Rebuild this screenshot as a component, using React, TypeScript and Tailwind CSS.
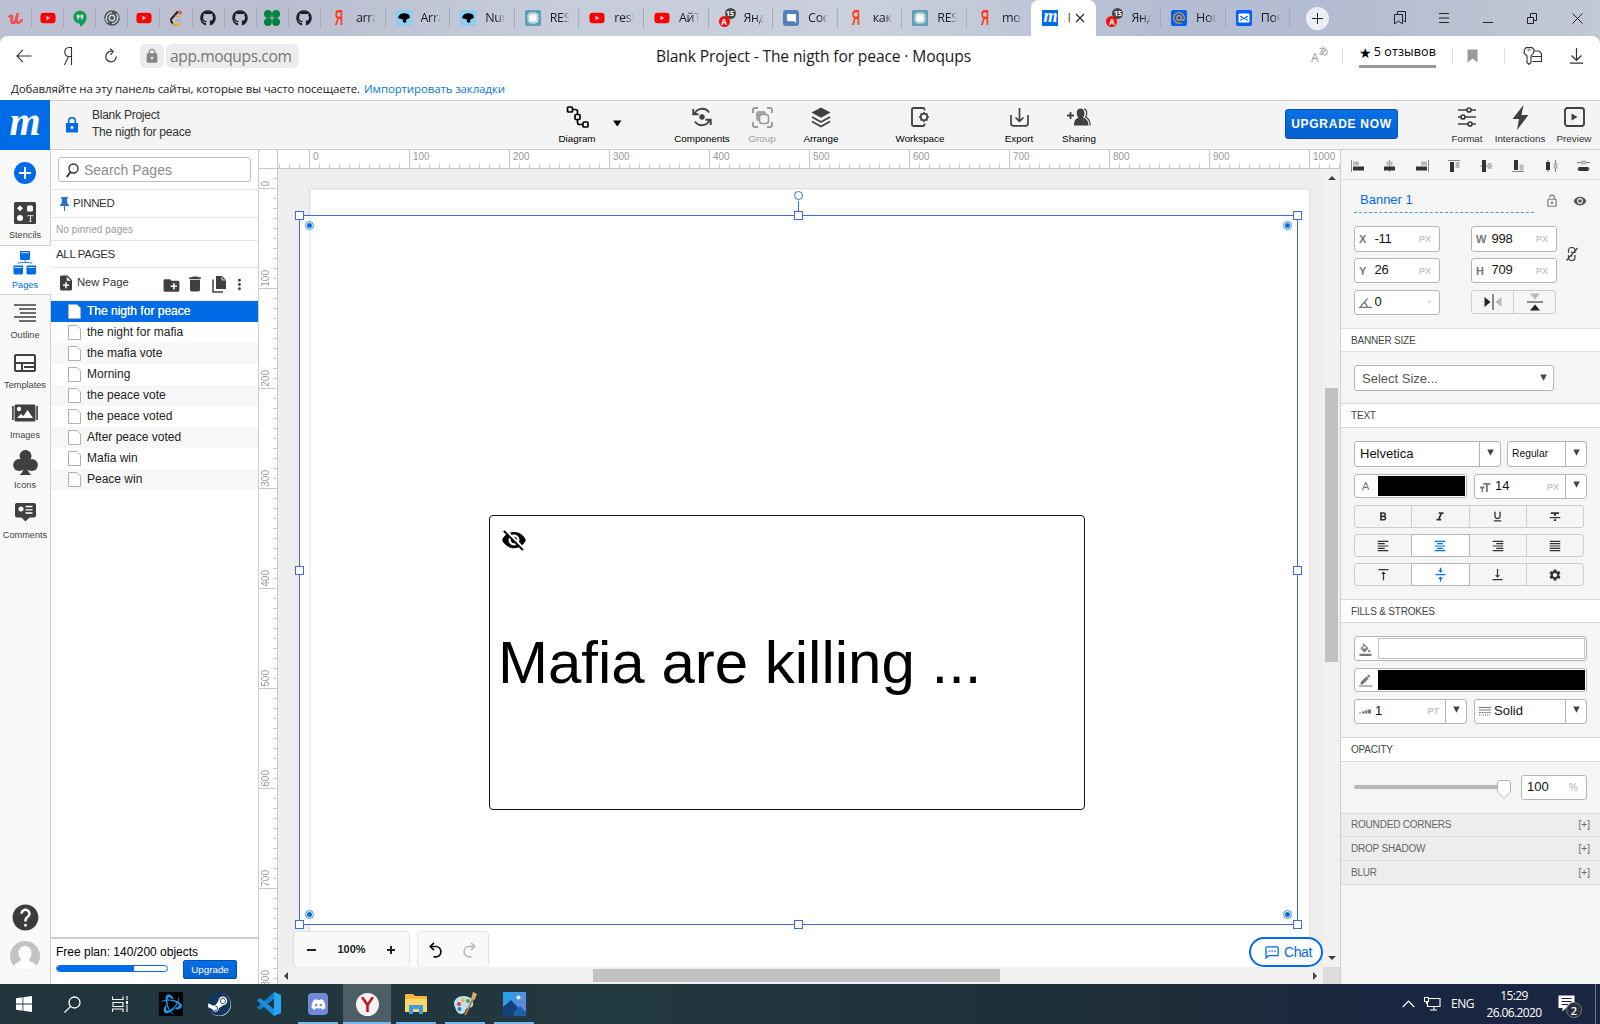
import React from "react";
import { FaGithub, FaYoutube, FaSteam, FaDiscord } from "react-icons/fa";
import { SiBattledotnet } from "react-icons/si";
import {
  MdCreateNewFolder, MdDelete, MdEdit, MdFormatAlignCenter, MdFormatAlignJustify, MdFormatAlignLeft,
  MdFormatAlignRight, MdFormatBold, MdFormatColorFill, MdFormatItalic, MdFormatStrikethrough,
  MdFormatUnderlined, MdHelp, MdLock, MdLockOpen, MdMoreVert, MdNoteAdd,
  MdSettings, MdVerticalAlignBottom, MdVerticalAlignCenter, MdVerticalAlignTop, MdVisibility,
  MdVisibilityOff, MdAlternateEmail, MdModeComment,
} from "react-icons/md";

type Kids = { children?: React.ReactNode };

/* ---------- browser chrome ---------- */

const Ya = () => (
  <span className="inline-block scale-x-[0.52] font-['Liberation_Sans'] text-[22px] font-bold leading-none text-[#fc3f1d]">Я</span>
);
const Tube = () => <FaYoutube size={16} color="#ff0000" />;
const Duck = () => (
  <svg width="16" height="16" viewBox="0 0 16 16">
    <rect width="16" height="16" fill="#8fcdf0" />
    <path d="M2 7.5C3 4 7 2.5 10 3.5C13 4 14.5 6 13.5 8C12.5 9 11 8.5 10.5 9.5L9.5 13L7 12L6.5 9C4 9 3 8.5 2 7.5Z" fill="#000" />
  </svg>
);
const Rest = () => (
  <svg width="16" height="16" viewBox="0 0 16 16">
    <rect width="16" height="16" rx="1.5" fill="#5f9dbb" />
    <circle cx="8" cy="8" r="3.600" fill="#fff" />
    <path d="M8 2V14M2 8H14M3.500 3.500L12.500 12.500M12.500 3.500L3.500 12.500M5.500 2.500L10.500 13.500M10.500 2.500L5.500 13.500M2.500 5.500L13.500 10.500M2.500 10.500L13.500 5.500" stroke="#fff" strokeWidth="1.100" />
  </svg>
);
const Anti = () => (
  <span className="relative block h-4 w-4">
    <span className="absolute -top-0.5 left-[6px] h-[11px] w-[11px] rounded-full bg-[#484848] text-center text-[7px] font-bold leading-[11px] text-white">15</span>
    <span className="absolute left-0 top-[6px] h-[11px] w-[11px] rounded-full bg-[#f50d0d] text-center text-[8px] font-bold leading-[11px] text-white">A</span>
  </span>
);
const Chatty = () => (
  <span className="flex h-4 w-4 items-center justify-center rounded-[3px] bg-[#5181b8] text-white"><MdModeComment size={11} /></span>
);
const Moq = () => (
  <span className="flex h-4 w-4 items-center justify-center bg-[#006be6] font-['Liberation_Serif'] text-[18px] font-bold italic leading-none text-white"><span className="-mt-[5px]">m</span></span>
);

const pinned: React.ReactNode[] = [
  <svg width="15" height="13" viewBox="0 0 15 13"><path d="M1.5 4.5C3 3.500 4.500 3 4 5.500C3.300 8.500 3 11 5 11C7 11 8 8 8.500 5M9.500 2C8.500 6 8 10.500 10 10.800C12 11 13 9.500 14 8" fill="none" stroke="#ec5252" strokeWidth="2.600" strokeLinecap="round" /></svg>,
  <Tube />,
  <svg width="14" height="17" viewBox="0 0 14 17"><path d="M7 0.500A6.500 6.500 0 0 0 7 13.800V16.500C10.500 15 13.600 11.500 13.600 7.200A6.600 6.600 0 0 0 7 0.500Z" fill="#0f9d58" /><path d="M3.800 4.800H6.400V7.600L5.300 9.400H4.300L5 7.600H3.800ZM7.600 4.800H10.200V7.600L9.100 9.400H8.100L8.800 7.600H7.600Z" fill="#fff" /></svg>,
  <svg width="16" height="16" viewBox="0 0 16 16"><circle cx="8" cy="8" r="7.800" fill="#4a565b" /><path d="M8 2.300A5.700 5.700 0 0 0 2.500 9M13.500 7A5.700 5.700 0 0 1 8 13.700M12 3.500Q14 5 14.200 8M4 12.500Q2 11 1.800 8" fill="none" stroke="#cfd5d8" strokeWidth="1.300" /><circle cx="8" cy="8" r="3.400" fill="#cfd5d8" /><circle cx="8" cy="8" r="1.900" fill="#4a565b" /></svg>,
  <Tube />,
  <svg width="14" height="17" viewBox="0 0 14 17"><path d="M8.500 2L2.500 8.500Q1.200 10.300 2.500 12L4 13.600" fill="none" stroke="#1a1a1a" strokeWidth="1.900" strokeLinecap="round" /><path d="M4.500 13.800Q7.500 17 10.500 13.700" fill="none" stroke="#f89f1b" strokeWidth="2" strokeLinecap="round" /><path d="M6 10.500H12" stroke="#b3b3b3" strokeWidth="1.500" /><path d="M6 6.500Q8.500 5 10.500 7.500" fill="none" stroke="#f89f1b" strokeWidth="1.500" /><circle cx="11" cy="2.500" r="2" fill="#e0524b" /></svg>,
  <FaGithub size={16} color="#1d2027" />,
  <FaGithub size={16} color="#1d2027" />,
  <svg width="16" height="16" viewBox="0 0 16 16" fill="#00843d"><circle cx="3.900" cy="3.900" r="3.900" /><circle cx="12.100" cy="3.900" r="3.900" /><circle cx="3.900" cy="12.100" r="3.900" /><circle cx="12.100" cy="12.100" r="3.900" /><path d="M3 3H7.500V7.500H3ZM8.500 3H13V7.500H8.500ZM3 8.500H7.500V13H3ZM8.500 8.500H13V13H8.500Z" /></svg>,
  <FaGithub size={16} color="#1d2027" />,
];

const tabs: [React.ReactNode, string][] = [
  [<Ya />, "arra"], [<Duck />, "Arra"], [<Duck />, "Nun"], [<Rest />, "RES"], [<Tube />, "rest"], [<Tube />, "АйТ"],
  [<Anti />, "Янд"], [<Chatty />, "Соо"], [<Ya />, "как"], [<Rest />, "RES"], [<Ya />, "mo"],
];
const tabsAfter: [React.ReactNode, string][] = [
  [<Anti />, "Янд"],
  [<span className="flex h-4 w-4 items-center justify-center rounded-[2px] bg-[#005ff9] text-[#ff9e00]"><MdAlternateEmail size={14} /></span>, "Нов"],
  [<svg width="16" height="16" viewBox="0 0 16 16"><rect width="16" height="16" rx="2" fill="#005ff9" /><rect x="2.500" y="3.500" width="11" height="9" rx="1" fill="#fff" /><path d="M4.500 6L8 9L11.500 6M4.500 10.500L6 9M11.500 10.500L10 9" fill="none" stroke="#005ff9" strokeWidth="1.300" /></svg>, "Поч"],
];

const Tab = ({ icon, text, last }: { icon: React.ReactNode; text: string; last?: boolean }) => (
  <div className={`flex h-5 w-[64.6px] shrink-0 items-center pl-[9px] ${last ? "" : "border-r border-[#a3aabb]"}`}>
    <span className="flex w-[18px] shrink-0 justify-center">{icon}</span>
    <span className="ml-[8px] w-[30px] shrink-0 whitespace-nowrap text-[12.5px] tracking-tight text-[#1d1f26] [mask-image:linear-gradient(90deg,#000_12px,transparent_20px)]">{text}</span>
  </div>
);

const TabBar = () => (
  <div className="flex h-9 items-center bg-[linear-gradient(90deg,#bcc0d2_0%,#b9bfd1_18%,#c6ccd9_34%,#c9cfdb_55%,#bdc4d6_66%,#b4bdd2_72%,#b3bcd0_84%,#c2c8d4_100%)] font-['Open_Sans']">
    {pinned.map((p, i) => (
      <div key={i} className="flex h-5 w-[32.1px] shrink-0 items-center justify-center border-r border-[#a3aabb]">{p}</div>
    ))}
    {tabs.map(([ic, t], i) => <Tab key={i} icon={ic} text={t} last={i === 10} />)}
    <div className="flex h-9 w-[65px] shrink-0 items-center rounded-t-[8px] bg-white pl-[11px]">
      <Moq />
      <span className="ml-[9px] w-[10px] text-[12.5px] text-[#555] [mask-image:linear-gradient(90deg,#000_2.5px,transparent_3px)]">B</span>
      <svg className="-ml-[2px]" width="10" height="10" viewBox="0 0 10 10"><path d="M1 1L9 9M9 1L1 9" stroke="#222" strokeWidth="1.100" /></svg>
    </div>
    {tabsAfter.map(([ic, t], i) => <Tab key={i} icon={ic} text={t} />)}
    <span className="ml-[16px] flex h-[23px] w-[23px] shrink-0 items-center justify-center rounded-full bg-[#edeff4]">
      <svg width="11" height="11" viewBox="0 0 11 11"><path d="M5.500 0V11M0 5.500H11" stroke="#222" /></svg>
    </span>
    <div className="ml-[64px] flex shrink-0 items-center">
      <svg width="14" height="16" viewBox="0 0 14 16" fill="none" stroke="#222"><path d="M4.500 4.500V1.500H12.500V12L10.500 10.500" /><path d="M1.500 4.500H9.500V14L5.500 11L1.500 14Z" /></svg>
      <svg className="ml-[31px]" width="12" height="10" viewBox="0 0 12 10"><path d="M1 .5H11M1 5H11M1 9.500H11" stroke="#222" /></svg>
      <svg className="ml-[32px] mt-[8px]" width="12" height="10" viewBox="0 0 12 10"><path d="M1 5.500H11" stroke="#222" /></svg>
      <svg className="ml-[32px]" width="12" height="11" viewBox="0 0 12 11" fill="none" stroke="#222"><path d="M1.500 4.500H7.500V10.500H1.500ZM4.500 4.500V.5H10.500V7.500H7.500" /></svg>
      <svg className="ml-[34px]" width="11" height="11" viewBox="0 0 11 11"><path d="M.5 .5L10.500 10.500M10.500 .5L.5 10.500" stroke="#222" /></svg>
    </div>
  </div>
);

const Sep = ({ className = "" }) => <span className={`h-4 w-px bg-[#dedede] ${className}`} />;

const AddressBar = () => (
  <div className="bg-[#bcc2d2] font-['Open_Sans']">
    <div className="flex h-10 items-center rounded-t-[8px] bg-white">
      <svg className="ml-[16px]" width="16" height="14" viewBox="0 0 16 14" fill="none" stroke="#333" strokeWidth="1.100"><path d="M15.500 7H1M7 .8L.9 7L7 13.200" /></svg>
      <svg className="ml-[31px]" width="10" height="20" viewBox="0 0 10 20" fill="none" stroke="#333" strokeWidth="1.100"><path d="M8.500 19V1.500H6C3 1.500 1.800 3.500 1.800 6C1.800 8.500 3 10.500 6 10.500H8.500M5.500 10.500L1.500 19" /></svg>
      <svg className="ml-[31px]" width="14" height="16" viewBox="0 0 14 16" fill="none" stroke="#333" strokeWidth="1.200"><path d="M7.500 3.500A5.200 5.200 0 1 0 12.200 8.500M6 .8L9.200 3.600L6.500 6.800" /></svg>
      <span className="ml-[22px] flex h-6 w-[24px] items-center justify-center rounded-[6px] bg-[#ececec] text-[#858585]"><MdLock size={16} /></span>
      <span className="ml-[2px] flex h-6 w-[133px] items-center rounded-[6px] bg-[#ececec] pl-[4px] pt-[2px] text-[15.600px] tracking-[-0.026em] text-[#777]">app.moqups.com</span>
      <div className="flex w-[1015px] items-center">
        <span className="ml-[357px] mt-[2px] whitespace-nowrap text-[15.600px] tracking-[-0.008em] text-[#1a1a1a]">Blank Project - The nigth for peace · Moqups</span>
      </div>
      <div className="-ml-[3px] flex shrink-0 items-center">
        <span className="flex w-[17px] items-start text-[#9a9a9a]"><span className="mt-1 text-[12px] leading-none">A</span><span className="-mt-0.5 font-['Noto_Sans_CJK_JP'] text-[10px] leading-none">あ</span></span>
        <Sep className="ml-[14px]" />
        <span className="ml-[16px] mt-[1px] box-content flex h-[14px] w-[77px] items-center justify-center whitespace-nowrap border-b-[3px] border-[#999] pb-[5px] text-[12.500px] leading-none tracking-[0.01em] text-black"><span className="mr-[2px] font-['DejaVu_Sans'] text-[14px]">★</span>5 отзывов</span>
        <Sep className="ml-[16px]" />
        <svg className="ml-[14px]" width="11" height="14" viewBox="0 0 11 14"><path d="M.5 .5H10.500V13.500L5.500 9.500L.5 13.500Z" fill="#999" /></svg>
        <Sep className="ml-[26px]" />
        <svg className="ml-[18px]" width="20" height="18" viewBox="0 0 20 18" fill="none" stroke="#333" strokeWidth="1.100"><path d="M3 .6H9L11 2.500L10.600 6L8 9V15.500L6 17.400L4 15.500V9L1 6L1.500 2.500ZM4.500 3H7.500M11 4H16L18.400 6.500V14.500H9.500M9 9.500H18" /></svg>
        <svg className="ml-[27px]" width="13" height="16" viewBox="0 0 13 16" fill="none" stroke="#333" strokeWidth="1.200"><path d="M6.500 0V12M1.500 7.500L6.500 12.300L11.500 7.500M0 15.200H13" /></svg>
      </div>
    </div>
    <div className="flex h-6 items-center bg-white pl-[11px] pt-[2px] text-[11.500px] text-[#222]">
      <span className="w-[353px] whitespace-nowrap tracking-[-0.011em]">Добавляйте на эту панель сайты, которые вы часто посещаете.</span>
      <span className="whitespace-nowrap tracking-[-0.012em] text-[#0a7ad6]">Импортировать закладки</span>
    </div>
  </div>
);

/* ---------- application header ---------- */

const Tool = ({ icon, label, className = "", tone = "text-black" }: { icon: React.ReactNode; label: string; className?: string; tone?: string }) => (
  <div className={`flex h-12 w-[60px] shrink-0 flex-col items-center ${className}`}>
    <span className="mt-[2px] flex h-[28px] items-center text-[#404040]">{icon}</span>
    <span className={`mt-[2px] text-[9.800px] leading-[12px] ${tone}`}>{label}</span>
  </div>
);

const Header = () => (
  <header className="flex h-[50px] shrink-0 border-b border-t border-[#d0d0d0] bg-[#f4f4f4]">
    <div className="-mt-px flex h-[50px] w-[50px] shrink-0 items-center justify-center bg-[#006be6]">
      <span className="-mt-[7px] font-['Liberation_Serif'] text-[40px] font-bold italic leading-none text-white">m</span>
    </div>
    <div className="flex w-[497px] shrink-0 items-center">
      <svg className="ml-[16px]" width="12" height="16" viewBox="0 0 12 16"><path d="M0 6H12V14.500Q12 15.500 11 15.500H1Q0 15.500 0 14.500Z" fill="#006be6" /><path d="M2.700 6V4A3.300 3.300 0 0 1 9.300 4V6" fill="none" stroke="#006be6" strokeWidth="1.600" /><circle cx="6" cy="10.500" r="1.500" fill="#fff" /></svg>
      <div className="ml-[14px] mt-[-2px] text-[12px] leading-[17px] tracking-[-0.02em] text-[#333]"><div>Blank Project</div><div>The nigth for peace</div></div>
    </div>
    <Tool label="Diagram" icon={<svg width="23" height="22" viewBox="0 0 23 22" fill="none" stroke="#000" strokeWidth="1.700"><rect x="1.500" y="1" width="5" height="5" rx="1" /><rect x="9" y="8.500" width="5" height="5" rx="1" /><rect x="17" y="16" width="5" height="5" rx="1" /><path d="M6.500 3.500H9.500Q11.500 3.500 11.500 5.500V8.500M11.500 13.500V16.500Q11.500 18.500 13.500 18.500H17" /></svg>} />
    <svg className="mr-[45px] mt-[19px] shrink-0" width="20" height="7" viewBox="0 0 20 7"><path d="M6 .5H14.500L10.300 6.500Z" fill="#000" /></svg>
    <Tool label="Components" icon={<svg width="20" height="20" viewBox="0 0 20 20" fill="none" stroke="#404040" strokeWidth="1.900"><path d="M2.500 7A8.200 8.200 0 0 1 17 5.500M17.500 13A8.200 8.200 0 0 1 3 14.500M1.300 2V7.300H6.500M18.700 18V12.700H13.500" /><circle cx="10" cy="10" r="2.700" fill="#404040" stroke="none" /></svg>} />
    <Tool label="Group" tone="text-[#a0a0a0]" className="-mr-px" icon={<svg width="21" height="21" viewBox="0 0 21 21"><path d="M1 6V3Q1 1 3 1H6M15 1H18Q20 1 20 3V6M20 15V18Q20 20 18 20H15M6 20H3Q1 20 1 18V15" fill="none" stroke="#9b9b9b" strokeWidth="1.900" /><rect x="4" y="4" width="10" height="10" rx="2.500" fill="#a5a5a5" /><rect x="7.500" y="7.500" width="9" height="9" rx="2.500" fill="#f4f4f4" stroke="#9b9b9b" strokeWidth="1.600" /></svg>} />
    <Tool label="Arrange" icon={<svg width="20" height="21" viewBox="0 0 20 21"><path d="M10 .5L19.500 5.500L10 10.700L.5 5.500Z" fill="#404040" /><path d="M1 10L10 15L19 10M1 14.500L10 19.500L19 14.500" fill="none" stroke="#404040" strokeWidth="1.800" /></svg>} />
    <Tool label="Workspace" className="ml-[39px]" icon={<svg width="20" height="20" viewBox="0 0 20 20" fill="none" stroke="#404040" strokeWidth="1.800"><path d="M14.500 3.500V2.500Q14.500 1 13 1H3.500Q2 1 2 2.500V17.500Q2 19 3.500 19H13Q14.500 19 14.500 17.500V16.500" /><circle cx="14" cy="10" r="3.300" /><path d="M14 5V6.500M14 13.500V15M9 10H10.500M17.500 10H19M10.500 6.500L11.700 7.700M16.300 12.300L17.500 13.500M17.500 6.500L16.300 7.700M11.700 12.300L10.500 13.500" strokeWidth="1.500" /></svg>} />
    <Tool label="Export" className="ml-[39px]" icon={<svg width="19" height="20" viewBox="0 0 19 20" fill="none" stroke="#404040" strokeWidth="1.700"><path d="M9.500 1V14M5.500 10.500L9.500 14.300L13.500 10.500M1 8V16.500Q1 18.800 3.500 18.800H15.500Q18 18.800 18 16.500V8" /></svg>} />
    <Tool label="Sharing" icon={<svg width="24" height="18" viewBox="0 0 24 18"><path d="M0 7.500H7M3.500 4V11" stroke="#404040" strokeWidth="1.800" /><path d="M13.500 .5C16 .5 17.500 2.300 17.500 5C17.500 7 16.700 8.500 16 9.500C19 11 21.500 12 21.500 17.500H7C7 12 9 11 11.500 9.500C10.500 8.500 9.700 7 9.700 5C9.700 2.300 11 .5 13.500 .5Z" fill="#404040" /><path d="M17 .8Q20 1.500 19.700 5.500Q19.500 7.500 18.500 9Q23 11 23.200 17.500" fill="none" stroke="#404040" strokeWidth="1.200" /></svg>} />
    <button className="ml-[176px] mt-[8px] h-[30px] w-[113px] shrink-0 whitespace-nowrap rounded-[3px] border border-[#0353b4] bg-gradient-to-b from-[#0a70e6] to-[#0560cf] text-[12px] font-bold tracking-[0.06em] text-white">UPGRADE NOW</button>
    <Tool label="Format" tone="text-[#333]" className="ml-[39px]" icon={<svg width="20" height="20" viewBox="0 0 20 20" fill="#f4f4f4" stroke="#404040" strokeWidth="1.700"><path d="M1 3H19M1 10H19M1 17H19" /><circle cx="12" cy="3" r="2" /><circle cx="6" cy="10" r="2" /><circle cx="13" cy="17" r="2" /></svg>} />
    <Tool label="Interactions" tone="text-[#333]" className="-ml-[7px]" icon={<svg width="17" height="25" viewBox="0 0 17 25"><path d="M11.500 0L.5 14H7L5 25L16.500 10H9.500Z" fill="#404040" /></svg>} />
    <Tool label="Preview" tone="text-[#333]" className="-ml-[6px]" icon={<svg width="21" height="20" viewBox="0 0 21 20"><rect x="1" y="1" width="19" height="18" rx="2.500" fill="none" stroke="#404040" strokeWidth="1.900" /><path d="M7.500 6.500V13.500L13.500 10Z" fill="#404040" /></svg>} />
  </header>
);

/* ---------- left side ---------- */

const RailItem = ({ icon, label, active }: { icon: React.ReactNode; label: string; active?: boolean }) => (
  <div className={`flex shrink-0 flex-col items-center ${active ? "h-[50px] w-[51px] border-y border-[#cfcfcf] bg-white pr-px" : "h-[50px] w-[50px]"}`}>
    <span className={`flex h-[29px] items-center justify-center ${active ? "mt-[2px]" : "mt-[3px]"}`}>{icon}</span>
    <span className={`mt-[2px] text-[9.200px] leading-[12px] ${active ? "text-[#006be6]" : "text-[#444]"}`}>{label}</span>
  </div>
);

const Rail = () => (
  <nav className="flex w-[51px] shrink-0 flex-col border-r border-[#cfcfcf] bg-[#f9f9f9]">
    <span className="mb-[11px] ml-[14px] mt-[12px] flex h-[22px] w-[22px] shrink-0 items-center justify-center rounded-full bg-[#006be6]">
      <svg width="12" height="12" viewBox="0 0 12 12"><path d="M6 0V12M0 6H12" stroke="#fff" strokeWidth="2" /></svg>
    </span>
    <RailItem label="Stencils" icon={<svg width="22" height="22" viewBox="0 0 22 22"><rect width="22" height="22" rx="1.500" fill="#404040" /><path d="M6 3.200L9 6.200L6 9.200L3 6.200Z" fill="#fff" /><rect x="13" y="3.500" width="6" height="6" rx="1.500" fill="#fff" /><circle cx="6" cy="16" r="3" fill="#fff" /><text x="16.300" y="19.500" fontSize="9.500" fontFamily="Liberation Serif" textAnchor="middle" fill="#fff">T</text></svg>} />
    <RailItem active label="Pages" icon={<svg width="24" height="24" viewBox="0 0 24 24" fill="#006be6"><path d="M7 0H17V7.500Q17 9 15.500 9H8.500Q7 9 7 7.500ZM.5 14.500H10V22Q10 23.500 8.500 23.500H2Q.5 23.500 .5 22ZM13.500 14.500H23V22Q23 23.500 21.500 23.500H15Q13.500 23.500 13.500 22Z" /><path d="M8 1.800H16M1.500 16.500H9M14.500 16.500H22" stroke="#fff" strokeWidth=".8" /><path d="M12 9V11.500M5 13Q5 11.500 7 11.500H17Q19 11.500 19 13" stroke="#006be6" strokeWidth=".8" fill="none" /></svg>} />
    <RailItem label="Outline" icon={<svg width="22" height="18" viewBox="0 0 22 18"><path d="M0 1H22M5 5H22M6 9H22M0 13H22M5 17H22" stroke="#404040" strokeWidth="1.700" /></svg>} />
    <RailItem label="Templates" icon={<svg width="22" height="18" viewBox="0 0 22 18"><rect x="1" y="1" width="20" height="16" rx="1" fill="none" stroke="#404040" strokeWidth="2" /><path d="M1 9H21M8 9V17M10 13H21" stroke="#404040" strokeWidth="2" /></svg>} />
    <RailItem label="Images" icon={<svg width="26" height="18" viewBox="0 0 26 18"><rect x="2.500" y=".5" width="21" height="17" rx="1.500" fill="#404040" /><path d="M.9 2V16M25.100 2V16" stroke="#404040" strokeWidth="1.600" /><circle cx="7" cy="5" r="2.200" fill="#fff" /><path d="M5 14L9 10L11.500 12L15.500 6L21 14Z" fill="#fff" /></svg>} />
    <RailItem label="Icons" icon={<svg width="25" height="25" viewBox="0 0 25 25" fill="#404040"><circle cx="12.500" cy="6" r="6" /><circle cx="6.200" cy="15" r="6.100" /><circle cx="18.800" cy="15" r="6.100" /><path d="M12.500 8L14 16Q15 23 18.500 25H6.500Q10 23 11 16ZM9 9H16V16H9Z" /></svg>} />
    <RailItem label="Comments" icon={<svg width="21" height="19" viewBox="0 0 21 19"><path d="M2 0H19Q21 0 21 2V12.500Q21 14.500 19 14.500H14.500L10.500 18.500L6.500 14.500H2Q0 14.500 0 12.500V2Q0 0 2 0Z" fill="#404040" /><circle cx="6" cy="6" r="2.500" fill="#fff" /><path d="M10.500 3.500H17.500M10.500 6.800H17.500M10.500 10H17.500" stroke="#fff" strokeWidth="1.300" /></svg>} />
    <div className="mb-[13px] mt-auto flex flex-col items-center">
      <MdHelp size={31} color="#3c3c3c" />
      <svg className="mt-[8px]" width="30" height="30" viewBox="0 0 30 30"><defs><clipPath id="av"><circle cx="15" cy="15" r="15" /></clipPath></defs><g clipPath="url(#av)"><rect width="30" height="30" fill="#c3c3c3" /><path d="M15 5C19 5 21.500 8 21.500 12C21.500 15 20.500 17 19 18.500C19 21 25 21.500 27 26V30H3V26C5 21.500 11 21 11 18.500C9.500 17 8.500 15 8.500 12C8.500 8 11 5 15 5Z" fill="#fff" /></g></svg>
    </div>
  </nav>
);

const PageIcon = () => (
  <svg width="13" height="15" viewBox="0 0 13 15"><path d="M.5 .5H9L12.500 4V14.500H.5Z" fill="#fff" stroke="#b0b0b0" /></svg>
);

const pages = ["The nigth for peace", "the night for mafia", "the mafia vote", "Morning", "the peace vote", "the peace voted", "After peace voted", "Mafia win", "Peace win"];

const PagesPanel = () => (
  <aside className="flex w-[208px] shrink-0 flex-col border-r border-[#cfcfcf] bg-white">
    <div className="h-[40px] shrink-0 border-b border-[#e6e6e6] px-[7px] pt-[7px]">
      <div className="flex h-[25px] w-[193px] items-center rounded-[3px] border border-[#bdbdbd] pl-[7px] pt-px text-[14px] text-[#8c8c8c]">
        <svg className="mr-[5px]" width="13" height="15" viewBox="0 0 13 15" fill="none" stroke="#333"><circle cx="7.500" cy="5.500" r="4.500" strokeWidth="1.400" /><path d="M4.500 9L.8 14" strokeWidth="2" /></svg>
        Search Pages
      </div>
    </div>
    <div className="flex h-[28px] shrink-0 items-center border-b border-[#e6e6e6] pl-[9px] text-[11.500px] tracking-[-0.03em] text-[#333]">
      <svg className="mr-[4px] mt-[1px]" width="9" height="14" viewBox="0 0 9 14" fill="#2e6fd6"><path d="M1 0H8V1.500H7L7.300 6L9 8V9H0V8L1.700 6L2 1.500H1ZM4 9H5V14H4Z" /></svg>
      PINNED
    </div>
    <div className="flex h-[23px] shrink-0 items-center border-b border-[#e6e6e6] pl-[5px] text-[10px] tracking-[0.01em] text-[#999]">No pinned pages</div>
    <div className="flex h-[27px] shrink-0 items-center border-b border-[#e6e6e6] pl-[5px] pt-[2px] text-[11.500px] tracking-[-0.03em] text-[#333]">ALL PAGES</div>
    <div className="flex h-[33px] shrink-0 items-center border-b border-[#eeeeee] text-[#404040]">
      <MdNoteAdd className="-mt-[2px] ml-[6px]" size={18} />
      <span className="ml-[2px] mr-[33px] mt-[-3px] whitespace-nowrap text-[11.200px] text-[#333]">New Page</span>
      <MdCreateNewFolder className="mt-[2px]" size={19} />
      <MdDelete className="ml-[4px]" size={20} />
      <svg className="ml-[7px] mt-px" width="14" height="17" viewBox="0 0 14 17"><path d="M4 0H10L14 4V13H4Z" fill="#404040" /><path d="M10 .8V4H13.500" fill="none" stroke="#fff" strokeWidth=".8" /><path d="M1 3.500V16H11" fill="none" stroke="#404040" strokeWidth="1.500" /></svg>
      <MdMoreVert className="ml-[5px] mt-px" size={17} />
    </div>
    {pages.map((p, i) => (
      <div key={p} className={`flex h-[21px] shrink-0 items-center pl-[17px] text-[12px] ${i === 0 ? "bg-[#006be6] text-white [text-shadow:0_0_0.5px_#fff]" : i % 2 === 0 ? "bg-[#f7f7f7] text-[#222]" : "bg-white text-[#222]"}`}>
        <PageIcon /><span className="-mt-[2px] ml-[6px]">{p}</span>
      </div>
    ))}
    <div className="mt-auto h-[47px] shrink-0 border-t-2 border-[#cfcfcf] pl-[5px] pt-[6px] text-[12px] leading-[14px] text-black">
      Free plan: 140/200 objects
      <div className="flex items-start">
        <div className="mt-[6px] h-[7px] w-[112px] overflow-hidden rounded-[4px] border border-[#006be6] bg-white"><div className="h-full w-[70%] bg-[#006be6]" /></div>
        <button className="ml-[15px] mt-[1px] h-[19px] w-[54px] rounded-[2px] border border-[#0353b4] bg-gradient-to-b from-[#0a70e6] to-[#0560cf] text-[9.800px] leading-none text-white">Upgrade</button>
      </div>
    </div>
  </aside>
);

/* ---------- canvas ---------- */

const TopRuler = () => (
  <div className="flex h-[19px] shrink-0 items-end overflow-hidden border-b border-[#c9c9c9] bg-white pl-px">
    {Array.from({ length: 107 }, (_, i) => {
      const major = i % 10 === 3;
      return (
        <div key={i} className={`w-[10px] shrink-0 whitespace-nowrap border-l border-[#c9c9c9] ${major ? "h-[18px]" : "h-[4px]"}`}>
          {major && <span className="ml-[3px] block text-[10px] leading-[14px] text-[#999]">{(i - 3) * 10}</span>}
        </div>
      );
    })}
  </div>
);

const LeftRuler = () => (
  <div className="flex w-[19px] shrink-0 flex-col overflow-hidden border-r border-[#c9c9c9] bg-white">
    <div className="h-[19px] shrink-0 border-b border-[#c9c9c9]" />
    <div className="h-[9px] shrink-0" />
    {Array.from({ length: 82 }, (_, i) => {
      const major = i % 10 === 1;
      return (
        <div key={i} className={`relative h-[10px] shrink-0 self-end border-t border-[#c9c9c9] ${major ? "w-[18px]" : "w-[4px]"}`}>
          {major && <span className="absolute bottom-[11px] left-[1px] rotate-180 text-[10px] leading-[12px] text-[#999] [writing-mode:vertical-rl]">{(i - 1) * 10}</span>}
        </div>
      );
    })}
  </div>
);

const Handle = ({ className }: { className: string }) => <span className={`absolute h-[9px] w-[9px] border border-[#4169d8] bg-white ${className}`} />;
const Dot = ({ className }: { className: string }) => (
  <span className={`absolute flex h-[9px] w-[9px] items-center justify-center rounded-full border border-[#3a8af0] bg-white ${className}`}><span className="h-[5px] w-[5px] rounded-full bg-[#006be6]" /></span>
);

const Canvas = () => (
  <div className="relative flex-1 overflow-hidden bg-[#eeeeee]">
    <div className="absolute left-[31px] top-[19px] h-[900px] w-[1001px] border border-[#e0e0e0] bg-white shadow-[inset_1px_1px_0_#f1f1f1]" />
    <div className="absolute left-[21px] top-[46px] h-[710px] w-[999px] border border-[#4169d8] bg-white">
      <div className="absolute left-[9px] top-0 h-full w-[2px] bg-[#f3f3f3]" />
      <div className="absolute left-[189px] top-[299px] h-[295px] w-[596px] rounded-[4px] border border-[#111] bg-white">
        <MdVisibilityOff className="absolute left-[11px] top-[11px]" size={26} color="#000" />
        <div className="absolute left-[8px] top-[112px] whitespace-nowrap text-[60px] leading-[69px] text-black">Mafia are killing ...</div>
      </div>
      <Dot className="left-[5px] top-[5px]" /><Dot className="right-[5px] top-[5px]" />
      <Dot className="bottom-[5px] left-[5px]" /><Dot className="bottom-[5px] right-[5px]" />
      <span className="absolute left-[498px] top-[-15px] h-[12px] w-px bg-[#4169d8]" />
      <span className="absolute left-[494px] top-[-25px] h-[9px] w-[9px] rounded-full border border-[#4169d8] bg-white" />
      <Handle className="left-[-5px] top-[-5px]" /><Handle className="left-[494px] top-[-5px]" /><Handle className="right-[-5px] top-[-5px]" />
      <Handle className="left-[-5px] top-[350px]" /><Handle className="right-[-5px] top-[350px]" />
      <Handle className="bottom-[-5px] left-[-5px]" /><Handle className="bottom-[-5px] left-[494px]" /><Handle className="bottom-[-5px] right-[-5px]" />
    </div>
    <div className="absolute -bottom-px left-[15px] flex gap-[7px]">
      <div className="flex h-[37px] w-[117px] items-center rounded-[5px] border border-[#e0e0e0] bg-[#f9f9f9] text-[11px] font-bold text-[#222]">
        <span className="ml-[13px] h-[2px] w-[9px] bg-[#222]" /><span className="w-[71px] text-center">100%</span>
        <svg width="8" height="8" viewBox="0 0 8 8"><path d="M4 0V8M0 4H8" stroke="#222" strokeWidth="2" /></svg>
      </div>
      <div className="flex h-[37px] w-[72px] items-center justify-between rounded-[5px] border border-[#e0e0e0] bg-[#f9f9f9] pl-[11px] pr-[12px]">
        <svg width="13" height="16" viewBox="0 0 13 16" fill="none" stroke="#111" strokeWidth="1.700"><path d="M5 .8L1.200 4.500L5 8.200M1.200 4.500H7A4.800 5 0 0 1 7 14.800H4.500" /></svg>
        <svg width="13" height="16" viewBox="0 0 13 16" fill="none" stroke="#b5b5b5" strokeWidth="1.500"><path d="M8 .8L11.800 4.500L8 8.200M11.800 4.500H6A4.800 5 0 0 0 6 14.800H8.500" /></svg>
      </div>
    </div>
    <div className="absolute bottom-0 right-0 flex h-[30px] w-[74px] items-center rounded-full border-2 border-[#006be6] bg-white pl-[14px] text-[14px] tracking-[-0.03em] text-[#006be6]">
      <svg className="mr-[5px]" width="14" height="13" viewBox="0 0 14 13" fill="none" stroke="#006be6" strokeWidth="1.300"><path d="M1 12V2Q1 .8 2.200 .8H12Q13.200 .8 13.200 2V8.500Q13.200 9.700 12 9.700H3.500Z" /><path d="M3.500 5.200H5M6.300 5.200H7.800M9.200 5.200H10.700" /></svg>
      Chat
    </div>
  </div>
);

const Workarea = () => (
  <main className="flex min-w-0 flex-1">
    <LeftRuler />
    <div className="flex min-w-0 flex-1 flex-col">
      <TopRuler />
      <div className="flex min-h-0 flex-1">
        <Canvas />
        <div className="flex w-[17px] shrink-0 flex-col items-center bg-[#f1f1f1]">
          <svg className="mt-[7px]" width="8" height="4" viewBox="0 0 8 4"><path d="M0 4L4 0L8 4Z" fill="#404040" /></svg>
          <div className="mt-[208px] h-[274px] w-[13px] bg-[#c1c1c1]" />
          <svg className="mb-[7px] mt-auto" width="8" height="4" viewBox="0 0 8 4"><path d="M0 0L4 4L8 0Z" fill="#404040" /></svg>
        </div>
      </div>
      <div className="flex h-[17px] shrink-0 items-center bg-[#f1f1f1]">
        <svg className="ml-[6px]" width="4" height="8" viewBox="0 0 4 8"><path d="M4 0L0 4L4 8Z" fill="#404040" /></svg>
        <div className="ml-[305px] h-[13px] w-[407px] bg-[#c1c1c1]" />
        <svg className="ml-auto mr-[6px]" width="4" height="8" viewBox="0 0 4 8"><path d="M0 0L4 4L0 8Z" fill="#404040" /></svg>
        <div className="h-[17px] w-[17px] bg-[#dcdcdc]" />
      </div>
    </div>
  </main>
);

/* ---------- format panel ---------- */

const box = "flex items-center rounded-[3px] border border-[#b5b5b5] bg-white text-[13px] text-[#111]";

const Caret = () => (
  <span className="flex h-full w-[21px] shrink-0 items-center justify-center border-l border-[#b5b5b5]">
    <svg className="-mt-[4px]" width="7" height="7" viewBox="0 0 7 7"><path d="M.2 .5H6.800L3.500 6.800Z" fill="#444" /></svg>
  </span>
);

const Field = ({ label, value, unit = "PX", className }: { label: React.ReactNode; value: string; unit?: string; className: string }) => (
  <div className={`${box} w-[86px] pl-[4px] pr-[8px] ${className}`}>
    <span className="mt-px w-[15.500px] text-[11px] font-bold text-[#777]">{label}</span>
    <span className="-mt-px tracking-[-0.02em]">{value}</span>
    <span className="ml-auto mt-[2px] text-[9px] font-bold text-[#c4c4c4]">{unit}</span>
  </div>
);

const Section = ({ children, className = "" }: Kids & { className?: string }) => (
  <div className={`flex shrink-0 items-center border-y border-[#dadada] bg-white pl-[10px] text-[10px] tracking-[-0.02em] text-[#444] ${className}`}>{children}</div>
);

const Buttons = ({ items, active, className = "" }: { items: React.ReactNode[]; active?: number; className?: string }) => (
  <div className={`flex h-[23px] w-[230px] shrink-0 rounded-[3px] border border-[#cdcdcd] text-[#333] ${className}`}>
    {items.map((it, i) => (
      <span key={i} className={`flex flex-1 items-center justify-center ${i === active ? "-my-px border border-[#b5b5b5] bg-white text-[#006be6]" : i && i - 1 !== active ? "border-l border-[#cdcdcd]" : ""}`}>{it}</span>
    ))}
  </div>
);

const aligns: React.ReactNode[] = [
  <g><path d="M.5 0V12" stroke="#888" /><rect x="2" y="1.500" width="6" height="4" fill="#bdb8b8" /><rect x="2" y="6.500" width="11" height="4" fill="#333" /></g>,
  <g><path d="M6.500 0V12" stroke="#888" /><rect x="3.500" y="1.500" width="6" height="4" fill="#bdb8b8" /><rect x="1" y="6.500" width="11" height="4" fill="#333" /></g>,
  <g><path d="M12.500 0V12" stroke="#888" /><rect x="5" y="1.500" width="6" height="4" fill="#bdb8b8" /><rect x="0" y="6.500" width="11" height="4" fill="#333" /></g>,
  <g><path d="M0 .5H12" stroke="#888" /><rect x="2" y="2" width="4" height="10" fill="#333" /><rect x="7.500" y="2" width="4" height="6" fill="#bdb8b8" /></g>,
  <g><path d="M0 6H12.500" stroke="#888" /><rect x="2" y="0" width="4" height="12" fill="#333" /><rect x="7.500" y="3" width="4" height="6" fill="#bdb8b8" /></g>,
  <g><path d="M0 11.500H12" stroke="#888" /><rect x="2" y="0" width="4" height="10" fill="#333" /><rect x="7.500" y="4.500" width="4" height="6" fill="#bdb8b8" /></g>,
  <g><path d="M3 0V12M10.500 0V12" stroke="#777" /><rect x="1" y="2" width="4" height="8" fill="#333" /><rect x="8.500" y="3" width="4" height="6" fill="#bdb8b8" /></g>,
  <g><path d="M0 2.500H13M0 9H13" stroke="#777" /><rect x="4" y=".5" width="5.500" height="4" fill="#bdb8b8" /><rect x="1.500" y="7" width="10" height="4" fill="#333" /></g>,
];

const FormatPanel = () => (
  <aside className="flex w-[260px] shrink-0 flex-col border-l border-[#cfcfcf] bg-[#f5f5f5]">
    <div className="flex h-[30px] shrink-0 items-center justify-between border-b border-[#dadada] pl-[10px] pr-[10px] pt-[3px]">
      {aligns.map((a, i) => <svg key={i} width="13" height="12" viewBox="0 0 13 12">{a}</svg>)}
    </div>
    <div className="flex h-[46px] shrink-0 pl-[13px]">
      <div className="h-[33px] w-[180px] border-b border-dashed border-[#4c97ea] pl-[6px] pt-[12px] text-[13px] leading-[16px] text-[#006be6]">Banner 1</div>
      <MdLockOpen className="ml-[11px] mt-[14px]" size={14} color="#777" />
      <MdVisibility className="ml-[14px] mt-[14px]" size={14} color="#555" />
    </div>
    <div className="flex h-[102px] shrink-0 items-start pl-[13px]">
      <div className="flex flex-col">
        <Field label="X" value="-11" className="h-[26px]" />
        <Field label="Y" value="26" className="mt-[6px] h-[25px]" />
        <Field label={<svg width="13" height="10" viewBox="0 0 13 10" fill="none" stroke="#777" strokeWidth="1.300"><path d="M8.500 .5L1 9.300H13M5 4.500Q8 6 8 9" /></svg>} value="0" unit="°" className="mt-[7px] h-[25px]" />
      </div>
      <div className="ml-[31px] flex flex-col">
        <Field label="W" value="998" className="h-[26px]" />
        <Field label="H" value="709" className="mt-[6px] h-[25px]" />
        <div className="mt-[7px] flex h-[24px] w-[85px] rounded-[3px] border border-[#cdcdcd]">
          <span className="flex flex-1 items-center justify-center"><svg width="18" height="16" viewBox="0 0 18 16"><path d="M.5 3V13L6.500 8Z" fill="#222" /><path d="M17.500 3V13L11.500 8Z" fill="#bdb8b8" /><path d="M9 0V16" stroke="#222" /></svg></span>
          <span className="flex flex-1 items-center justify-center border-l border-[#cdcdcd]"><svg width="16" height="18" viewBox="0 0 16 18"><path d="M3 .5H13L8 6.500Z" fill="#bdb8b8" /><path d="M3 17.500H13L8 11.500Z" fill="#222" /><path d="M0 9H16" stroke="#222" /></svg></span>
        </div>
      </div>
      <svg className="ml-[9px] mt-[21px]" width="12" height="14" viewBox="0 0 12 14" fill="none" stroke="#444" strokeWidth="1.300"><path d="M2.500 6V3.500A3 2.800 0 0 1 9 3.500V6M9 8V10.500A3 2.800 0 0 1 2.500 10.500V8M5.800 4.500V6M5.800 8V9.500M.5 13.500L11.500 1" /></svg>
    </div>
    <Section className="h-[24px]">BANNER SIZE</Section>
    <div className="h-[51px] shrink-0 pl-[13px] pt-[13px]">
      <div className={`${box} h-[26px] w-[200px] justify-between pl-[7px] pr-[6px] pt-px !text-[#555]`}>Select Size...<svg className="-mt-[2px]" width="7" height="7" viewBox="0 0 7 7"><path d="M.2 .5H6.800L3.500 6.800Z" fill="#444" /></svg></div>
    </div>
    <Section className="h-[25px]">TEXT</Section>
    <div className="flex h-[171px] shrink-0 flex-col pl-[13px] pt-[13px]">
      <div className="flex">
        <div className={`${box} h-[26px] w-[147px] pl-[5px]`}><span className="flex-1">Helvetica</span><Caret /></div>
        <div className={`${box} ml-[6px] h-[26px] w-[80px] pl-[4px] !text-[10.300px]`}><span className="flex-1">Regular</span><Caret /></div>
      </div>
      <div className="mt-[7px] flex items-start">
        <div className={`${box} h-[24px] w-[113px] pl-[7px]`}><span className="w-[16px] text-[11px] text-[#777]">A</span><span className="h-[20px] w-[87px] bg-black" /></div>
        <div className={`${box} ml-[7px] h-[25px] w-[113px] pl-[5px]`}><svg className="mt-[1px]" width="11" height="9" viewBox="0 0 12 10"><path d="M0 4H5V6H3.300V10H1.700V6H0ZM3.500 0H11.500V2H8.500V10H6.500V2H3.500Z" fill="#777" /></svg><span className="-mt-[1px] ml-[4px] flex-1">14</span><span className="mr-[6px] mt-[2px] text-[9px] font-bold text-[#c4c4c4]">PX</span><Caret /></div>
      </div>
      <Buttons className="mt-[6px]" items={[<MdFormatBold size={14} />, <MdFormatItalic size={14} />, <MdFormatUnderlined size={13} />, <MdFormatStrikethrough size={14} />]} />
      <Buttons className="mt-[6px]" active={1} items={[<MdFormatAlignLeft size={14} />, <MdFormatAlignCenter size={14} />, <MdFormatAlignRight size={14} />, <MdFormatAlignJustify size={14} />]} />
      <Buttons className="mt-[6px]" active={1} items={[<MdVerticalAlignTop size={15} />, <MdVerticalAlignCenter size={15} />, <MdVerticalAlignBottom size={15} />, <MdSettings size={14} />]} />
    </div>
    <Section className="h-[24px]">FILLS &amp; STROKES</Section>
    <div className="flex h-[114px] shrink-0 flex-col pl-[13px] pt-[13px]">
      <div className={`${box} h-[25px] w-[233px] pl-[4px]`}><span className="w-[19px] text-[#777]"><MdFormatColorFill className="mt-[2px]" size={13} /><span className="-mt-[2px] block h-[2px] w-[13px] bg-[#bdb8b8]" /></span><span className="h-[21px] w-[207px] border border-[#c4c4c4]" /></div>
      <div className={`${box} mt-[7px] h-[24px] w-[233px] pl-[4px]`}><span className="w-[19px] text-[#777]"><MdEdit size={13} /><span className="-mt-px block h-[2px] w-[13px] bg-[#bdb8b8]" /></span><span className="h-[20px] w-[207px] bg-black" /></div>
      <div className="mt-[7px] flex">
        <div className={`${box} h-[25px] w-[113px] pl-[4px]`}><svg width="12" height="5" viewBox="0 0 12 5" fill="#777"><path d="M0 3.500H2V4.500H0ZM3 2.500H5V4.500H3ZM5.500 1.500H8V4.500H5.500ZM8.500 .5H12V4.500H8.500Z" /></svg><span className="-mt-[2px] ml-[4px] flex-1">1</span><span className="mr-[6px] mt-px text-[9px] font-bold text-[#c4c4c4]">PT</span><Caret /></div>
        <div className={`${box} ml-[7px] h-[25px] w-[113px] pl-[4px]`}><svg width="12" height="9" viewBox="0 0 12 9" stroke="#777"><path d="M0 .5H12M0 3H12" /><path d="M0 5.500H12" strokeDasharray="2 .7" /><path d="M0 8H12" strokeDasharray="1 1" /></svg><span className="-mt-[2px] ml-[3px] flex-1">Solid</span><Caret /></div>
      </div>
    </div>
    <Section className="h-[25px]">OPACITY</Section>
    <div className="flex h-[51px] shrink-0 items-start pl-[13px] pt-[13px]">
      <span className="mt-[10px] h-[4px] w-[143px] rounded-l bg-[#b8b8b8]" />
      <svg className="mt-[5px]" width="14" height="19" viewBox="0 0 14 19"><path d="M3 .5H11Q13.500 .5 13.500 3V12L7 18.300L.5 12V3Q.5 .5 3 .5Z" fill="#fff" stroke="#b5b5b5" /></svg>
      <div className={`${box} ml-[10px] h-[25px] w-[66px] justify-between pl-[5px] pr-[8px]`}><span className="-mt-[2px]">100</span><span className="text-[10px] text-[#b5b5b5]">%</span></div>
    </div>
    {["ROUNDED CORNERS", "DROP SHADOW", "BLUR"].map((t, i) => (
      <div key={t} className={`flex shrink-0 items-center justify-between border-t border-[#dadada] bg-[#ededed] pl-[10px] pr-[10px] text-[10px] tracking-[-0.02em] text-[#666] ${i === 0 ? "h-[23px] pb-px" : i === 1 ? "h-[24px]" : "h-[25px] border-b"}`}>{t}<span className="tracking-normal">[+]</span></div>
    ))}
  </aside>
);

/* ---------- taskbar ---------- */

const Task = ({ children, open, active, className = "" }: Kids & { open?: boolean; active?: boolean; className?: string }) => (
  <div className={`relative flex h-10 w-12 shrink-0 items-center justify-center ${active ? "bg-[#4d5e66]" : ""} ${className}`}>
    {children}
    {(open || active) && <span className={`absolute bottom-0 h-[2px] bg-[#76b9ed] ${active ? "w-12" : "w-10"}`} />}
  </div>
);

const Taskbar = () => (
  <footer className="flex h-10 items-center bg-[linear-gradient(90deg,#20343c_0%,#22383f_40%,#1c2c39_75%,#1a2740_85%,#1a2542_100%)] font-['Open_Sans'] text-white">
    <Task><svg width="16" height="16" viewBox="0 0 16 16" fill="#fff"><path d="M0 2.200L6.500 1.300V7.600H0ZM7.300 1.200L16 0V7.600H7.300ZM0 8.400H6.500V14.700L0 13.800ZM7.300 8.400H16V16L7.300 14.800Z" /></svg></Task>
    <Task><svg width="17" height="17" viewBox="0 0 17 17" fill="none" stroke="#fff" strokeWidth="1.300"><circle cx="10.500" cy="6.500" r="5.500" /><path d="M6.500 10.500L.5 16.500" /></svg></Task>
    <Task><svg width="17" height="16" viewBox="0 0 17 16" fill="none" stroke="#fff" strokeWidth="1.100"><path d="M.5 .5V3.500H11V.5M1 6.500H11V10.500H1ZM.5 16V13H11V16M15 0V4M15 9V16" /><path d="M15 5V8" strokeWidth="2" /></svg></Task>
    <Task className="ml-[3px]"><span className="flex h-6 w-6 items-center justify-center bg-black"><SiBattledotnet size={21} color="#189be8" /></span></Task>
    <Task><span className="flex h-[23px] w-[23px] items-center justify-center rounded-full bg-white"><FaSteam className="shrink-0" size={24} color="#14365f" /></span></Task>
    <Task className="ml-[2px]"><svg width="24" height="24" viewBox="0 0 24 24"><path d="M17 0L24 3V21L17 24Z" fill="#2aa7f2" /><path d="M17 0V7L3 18L0 15.500Z" fill="#1080cc" /><path d="M17 24V17L3 6L0 8.500Z" fill="#1591de" /></svg></Task>
    <Task open className="ml-[1px]"><span className="flex h-[22px] w-[20px] items-center justify-center rounded-[4px] bg-[#7289da]"><FaDiscord size={15} /></span></Task>
    <Task active className="ml-[1px]"><span className="flex h-[23px] w-[23px] items-center justify-center rounded-full bg-[#f3f3f3]"><svg width="13" height="15" viewBox="0 0 13 15"><path d="M1 0L6.500 8L12 0M6.500 8V15" fill="none" stroke="#c4171c" strokeWidth="2.600" /></svg></span></Task>
    <Task open className="ml-px"><svg width="22" height="20" viewBox="0 0 22 20"><path d="M0 1Q0 0 1 0H8L10 2H21Q22 2 22 3V17H0Z" fill="#f5b83a" /><path d="M0 5H22V18H0Z" fill="#ffd767" /><path d="M4 20V12Q4 11 5 11H17Q18 11 18 12V20H14V15H8V20Z" fill="#3f9be0" /></svg></Task>
    <Task open className="ml-px"><svg width="24" height="24" viewBox="0 0 24 24"><path d="M2 15C-1 10 3 4 11 4C18 4 21 9 20 13C19 17 15 15 13 17C12 19 12 22 8 22C5 22 3 19 2 15Z" fill="#bfe0f3" /><circle cx="6" cy="12" r="2" fill="#d8423e" /><circle cx="10" cy="8" r="2" fill="#f0b52c" /><circle cx="15" cy="9" r="2" fill="#4ba646" /><circle cx="6.500" cy="17" r="2" fill="#3b73c9" /><path d="M12 23L20 7" stroke="#b77a37" strokeWidth="2" /><path d="M18 7L20 0L24 2L21.500 8Z" fill="#e0a860" /></svg></Task>
    <Task open className="ml-px"><svg width="23" height="24" viewBox="0 0 23 24"><defs><linearGradient id="ph" x1="0" y1="0" x2="1" y2="1"><stop offset="0" stopColor="#1aa7e8" /><stop offset="1" stopColor="#7d7be0" /></linearGradient></defs><rect width="23" height="24" fill="url(#ph)" /><path d="M0 15L8 8L23 24H0Z" fill="#13427d" /><path d="M11 20L17 14L23 20V24H11Z" fill="#1d5fa8" /><circle cx="15.500" cy="5.500" r="2" fill="#fff" /></svg></Task>
    <div className="ml-auto flex h-10 items-center">
      <svg width="13" height="8" viewBox="0 0 13 8"><path d="M.8 7L6.500 1.200L12.200 7" fill="none" stroke="#fff" strokeWidth="1.200" /></svg>
      <svg className="ml-[9px]" width="17" height="14" viewBox="0 0 17 14" fill="none" stroke="#fff" strokeWidth="1.100"><path d="M5 1.500H16V9.500H3.500V5M.5 .5H4.500V4.500H.5ZM10 9.500V13M6 13H13M2.500 4.500V7" /></svg>
      <span className="ml-[10px] w-[24px] text-[12px] tracking-[-0.04em]">ENG</span>
      <div className="ml-[9px] w-[60px] text-center text-[12px] leading-[17px] tracking-[-0.05em]"><div>15:29</div><div className="whitespace-nowrap">26.06.2020</div></div>
      <div className="relative ml-[14px] h-[24px] w-[24px]">
        <svg className="mt-[3px]" width="17" height="17" viewBox="0 0 17 17"><path d="M.5 .5H16.500V13H8L4.500 16.500V13H.5Z" fill="#fff" /><path d="M3.500 3.500H13.500M3.500 6.500H13.500M3.500 9.500H10" stroke="#1a2542" /></svg>
        <span className="absolute left-[8px] top-[10px] flex h-4 w-4 items-center justify-center rounded-full border border-[#777] bg-[#2b2f3b] text-[11px] font-semibold leading-none">2</span>
      </div>
      <span className="ml-[13px] mr-[4px] h-10 w-px bg-[#6c7690]" />
    </div>
  </footer>
);

export default function App() {
  return (
    <div className="flex h-[1024px] w-[1600px] flex-col overflow-hidden bg-white font-['Liberation_Sans',Arial,sans-serif]">
      <TabBar />
      <AddressBar />
      <Header />
      <div className="flex min-h-0 flex-1">
        <Rail />
        <PagesPanel />
        <Workarea />
        <FormatPanel />
      </div>
      <Taskbar />
    </div>
  );
}
